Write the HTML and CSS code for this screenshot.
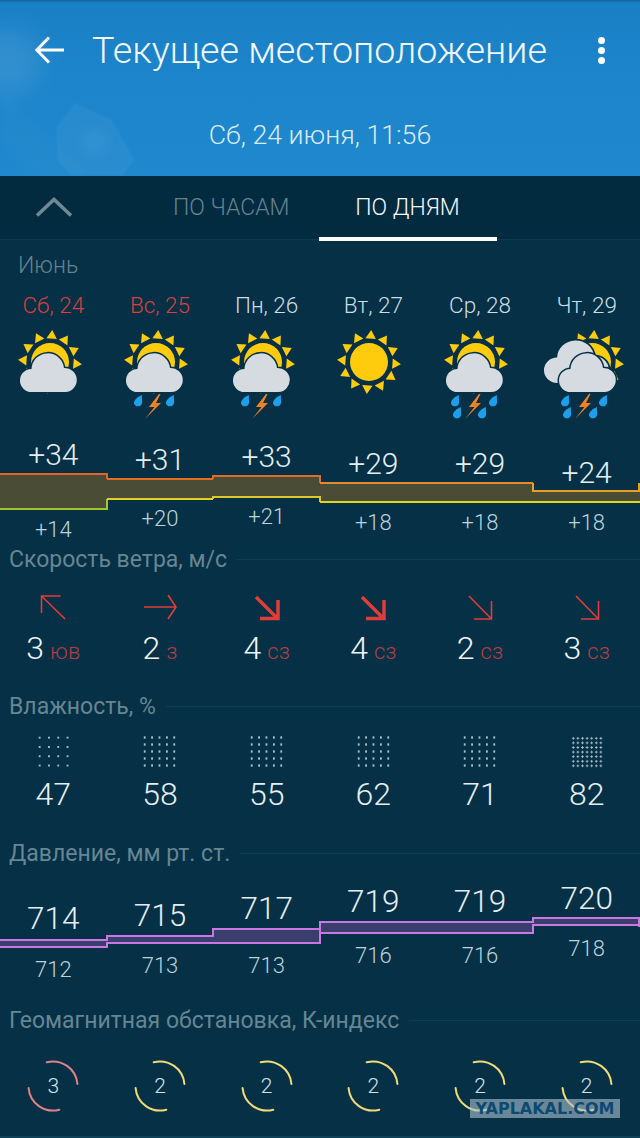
FILE: index.html
```html
<!DOCTYPE html>
<html lang="ru">
<head>
<meta charset="utf-8">
<title>Погода</title>
<link rel="stylesheet" href="styles.css">
</head>
<body>
<svg class="defs" width="0" height="0" aria-hidden="true">
  <defs>
    <polygon id="ray" points="-5.2,-23.5 5.2,-23.5 0,-32"/>
    <g id="sun">
      <g class="ray-fill">
        <use href="#ray" transform="rotate(4)"/><use href="#ray" transform="rotate(34)"/><use href="#ray" transform="rotate(64)"/>
        <use href="#ray" transform="rotate(94)"/><use href="#ray" transform="rotate(124)"/><use href="#ray" transform="rotate(154)"/>
        <use href="#ray" transform="rotate(184)"/><use href="#ray" transform="rotate(214)"/><use href="#ray" transform="rotate(244)"/>
        <use href="#ray" transform="rotate(274)"/><use href="#ray" transform="rotate(304)"/><use href="#ray" transform="rotate(334)"/>
      </g>
      <circle class="sun-disc" r="19"/>
    </g>
    <path id="cloud" class="cloud-shape" d="M13.500 63A11.500 11.500 0 0 1 13.500 40A16.300 16.300 0 0 1 46 39A12 12 0 0 1 47.500 63Z"/>
    <path id="bolt" class="bolt-shape" d="M35 65L25 78H30.500L21 90L37 74H32L36.500 65Z"/>
    <path id="drop" class="drop-shape" d="M4 -7C3.500 -3.500 4.600 -1 4 1.200A4.200 4.200 0 0 1 -4.100 1.200C-4 -2.200 0 -5.500 4 -7Z"/>
    <g id="gauge-arcs">
      <path d="M-6.3 -23.7A24.5 24.5 0 0 1 24.4 -2.1"/>
      <path d="M-24.4 2.1A24.5 24.5 0 0 0 6.3 23.7"/>
    </g>
  </defs>
</svg>

<div class="app">
  <header class="hero">
    <svg class="flare" viewBox="0 0 640 176" aria-hidden="true">
      <circle class="flare-soft" cx="8" cy="62" r="34"/>
      <polygon class="flare-hex" points="75,103 112,120 134,160 122,176 72,176 58,160 56,128"/>
      <circle class="flare-inner" cx="95" cy="142" r="14"/>
      <polygon class="flare-streak" points="0,88 90,176 30,176 0,140"/>
    </svg>
    <div class="appbar">
      <svg class="back" viewBox="0 0 30 28" aria-hidden="true"><path d="M29 14H2M14 1.5L1.8 14L14 26.5"/></svg>
      <h1 class="title">Текущее местоположение</h1>
      <div class="kebab"><i></i><i></i><i></i></div>
    </div>
    <p class="date">Сб, 24 июня, 11:56</p>
  </header>

  <nav class="tabs">
    <svg class="chevron" viewBox="0 0 38 20" aria-hidden="true"><path d="M2 18.5L19 2.5L36 18.5"/></svg>
    <span class="tab tab-hours">ПО ЧАСАМ</span>
    <span class="tab tab-days">ПО ДНЯМ</span>
  </nav>

  <section class="forecast">
    <div class="month">Июнь</div>
    <div class="cols days">
      <span class="holiday">Сб, 24</span><span class="holiday">Вс, 25</span><span>Пн, 26</span><span>Вт, 27</span><span>Ср, 28</span><span>Чт, 29</span>
    </div>
    <div class="cols icons">
      <svg class="wx" viewBox="0 0 71 92"><use href="#sun" x="32" y="33"/><use href="#cloud"/></svg>
      <svg class="wx" viewBox="0 0 71 92"><use href="#sun" x="32" y="33"/><use href="#cloud"/><use href="#drop" x="14" y="73"/><use href="#drop" x="46" y="73"/><use href="#bolt"/></svg>
      <svg class="wx" viewBox="0 0 71 92"><use href="#sun" x="32" y="33"/><use href="#cloud"/><use href="#drop" x="14" y="73"/><use href="#drop" x="46" y="73"/><use href="#bolt"/></svg>
      <svg class="wx" viewBox="0 0 71 92"><use href="#sun" x="31" y="33"/></svg>
      <svg class="wx" viewBox="0 0 71 92"><use href="#sun" x="32" y="33"/><use href="#cloud"/><use href="#drop" x="11" y="73"/><use href="#drop" x="49" y="73"/><use href="#drop" x="13" y="85"/><use href="#drop" x="38" y="85"/><use href="#bolt"/></svg>
      <svg class="wx" viewBox="0 0 71 92"><use href="#sun" x="41" y="33"/><use href="#cloud" transform="translate(-9.300 -15.400) scale(1.140 1.100)"/><use href="#cloud" x="6"/><use href="#drop" x="14" y="73"/><use href="#drop" x="52" y="73"/><use href="#drop" x="16" y="85"/><use href="#drop" x="42" y="85"/><use href="#bolt" x="3"/></svg>
    </div>
    <div class="chart chart-temp">
      <svg class="plot" viewBox="0 0 640 112" aria-hidden="true">
        <polygon class="temp-fill" points="0,42 107,42 107,47 213,47 213,44 320,44 320,51 533,51 533,59 640,59 640,70 320,70 320,65 213,65 213,67 107,67 107,77 0,77"/>
        <path class="ln" stroke="#e2622a" d="M0 42H107V47"/>
        <path class="ln" stroke="#e2701f" d="M107 47H213"/>
        <path class="ln" stroke="#dd6c26" d="M213 47V44H320V51"/>
        <path class="ln" stroke="#e28c2e" d="M320 51H533"/>
        <path class="ln" stroke="#e8a024" d="M533 51V59H639V51"/>
        <path class="ln" stroke="#a3c42a" d="M0 77H107V67"/>
        <path class="ln" stroke="#e2d022" d="M107 67H213"/>
        <path class="ln" stroke="#dfc92a" d="M213 67V65H320V70"/>
        <path class="ln" stroke="#dcd820" d="M320 70H640"/>
      </svg>
      <div class="cols chart-cols">
        <div><div class="hi" style="padding-top:5px">+34</div><div class="lo" style="margin-top:44px">+14</div></div>
        <div><div class="hi" style="padding-top:10px">+31</div><div class="lo" style="margin-top:28px">+20</div></div>
        <div><div class="hi" style="padding-top:7px">+33</div><div class="lo" style="margin-top:29px">+21</div></div>
        <div><div class="hi" style="padding-top:14px">+29</div><div class="lo" style="margin-top:28px">+18</div></div>
        <div><div class="hi" style="padding-top:14px">+29</div><div class="lo" style="margin-top:28px">+18</div></div>
        <div><div class="hi" style="padding-top:23px">+24</div><div class="lo" style="margin-top:19px">+18</div></div>
      </div>
    </div>
  </section>

  <section class="metric metric-wind">
    <div class="label"><span>Скорость ветра, м/с</span></div>
    <div class="cols arrows">
      <svg class="arrow thin" viewBox="0 0 40 42"><path d="M32 33L8.500 10M8.500 27V10H27.500"/></svg>
      <svg class="arrow thin" viewBox="0 0 40 42"><path d="M4 21H36M28 9L36 21L28 33"/></svg>
      <svg class="arrow thick" viewBox="0 0 40 42"><path d="M9 11L30 32M31 14V32.500H13"/></svg>
      <svg class="arrow thick" viewBox="0 0 40 42"><path d="M9 11L30 32M31 14V32.500H13"/></svg>
      <svg class="arrow thin" viewBox="0 0 40 42"><path d="M9 10L31.500 33M31.500 15V33H14"/></svg>
      <svg class="arrow thin" viewBox="0 0 40 42"><path d="M9 10L31.500 33M31.500 15V33H14"/></svg>
    </div>
    <div class="cols wind-values">
      <div><b>3</b><small>юв</small></div>
      <div><b>2</b><small>з</small></div>
      <div><b>4</b><small>сз</small></div>
      <div><b>4</b><small>сз</small></div>
      <div><b>2</b><small>сз</small></div>
      <div><b>3</b><small>сз</small></div>
    </div>
  </section>

  <section class="metric metric-humidity">
    <div class="label"><span>Влажность, %</span></div>
    <div class="cols dots-row">
      <i class="dots d4"></i><i class="dots d5"></i><i class="dots d5"></i><i class="dots d5"></i><i class="dots d5"></i><i class="dots d7"></i>
    </div>
    <div class="cols hum-values">
      <span>47</span><span>58</span><span>55</span><span>62</span><span>71</span><span>82</span>
    </div>
  </section>

  <section class="metric metric-pressure">
    <div class="label"><span>Давление, мм рт. ст.</span></div>
    <div class="chart chart-press">
      <svg class="plot" viewBox="0 0 640 139" aria-hidden="true">
        <polygon class="press-fill" points="0,73 107,73 107,69 213,69 213,62 320,62 320,55 533,55 533,51 640,51 640,58 533,58 533,66 320,66 320,76 107,76 107,80 0,80"/>
        <path class="ln press-ln" d="M0 73H107V69H213V62H320V55H533V51H640"/>
        <path class="ln press-ln" d="M0 80H107V76H320V66H533V58H640"/>
        <path class="ln press-ln" d="M320 55V76"/>
        <path class="ln press-ln" d="M639 51V60"/>
      </svg>
      <div class="cols chart-cols">
        <div><div class="hi press-hi" style="padding-top:34px">714</div><div class="lo" style="margin-top:20px">712</div></div>
        <div><div class="hi press-hi" style="padding-top:31px">715</div><div class="lo" style="margin-top:19px">713</div></div>
        <div><div class="hi press-hi" style="padding-top:24px">717</div><div class="lo" style="margin-top:26px">713</div></div>
        <div><div class="hi press-hi" style="padding-top:17px">719</div><div class="lo" style="margin-top:23px">716</div></div>
        <div><div class="hi press-hi" style="padding-top:17px">719</div><div class="lo" style="margin-top:23px">716</div></div>
        <div><div class="hi press-hi" style="padding-top:14px">720</div><div class="lo" style="margin-top:19px">718</div></div>
      </div>
    </div>
  </section>

  <section class="metric metric-geo">
    <div class="label"><span>Геомагнитная обстановка, К-индекс</span></div>
    <div class="cols gauges">
      <div class="gauge g-red"><svg viewBox="-26 -26 52 52"><use href="#gauge-arcs"/></svg><span>3</span></div>
      <div class="gauge g-yellow"><svg viewBox="-26 -26 52 52"><use href="#gauge-arcs"/></svg><span>2</span></div>
      <div class="gauge g-yellow"><svg viewBox="-26 -26 52 52"><use href="#gauge-arcs"/></svg><span>2</span></div>
      <div class="gauge g-yellow"><svg viewBox="-26 -26 52 52"><use href="#gauge-arcs"/></svg><span>2</span></div>
      <div class="gauge g-yellow"><svg viewBox="-26 -26 52 52"><use href="#gauge-arcs"/></svg><span>2</span></div>
      <div class="gauge g-yellow"><svg viewBox="-26 -26 52 52"><use href="#gauge-arcs"/></svg><span>2</span></div>
    </div>
  </section>

  <div class="watermark">YAPLAKAL.COM</div>
</div>
</body>
</html>
```

FILE: styles.css
```css
* { box-sizing: border-box; }
html, body { margin: 0; padding: 0; }
body {
  width: 640px;
  height: 1138px;
  overflow: hidden;
  background: #05304a;
  font-family: Roboto, "Liberation Sans", sans-serif;
  font-weight: 300;
  color: #dbe8ee;
}
.defs { position: absolute; }
.app {
  position: relative;
  width: 640px;
  height: 1138px;
  overflow: hidden;
  background: #053045;
  border-bottom: 2px solid #0f4258;
}

/* Header */
.hero {
  position: relative;
  height: 176px;
  background: linear-gradient(180deg, #13639b 0, #1a80c6 3px, #1c84ca 40%, #2088cd 100%);
  overflow: hidden;
}
.flare { position: absolute; inset: 0; width: 640px; height: 176px; }
.flare-soft { fill: #fff; opacity: .09; filter: blur(12px); }
.flare-hex { fill: #fff; opacity: .045; filter: blur(1px); }
.flare-inner { fill: #fff; opacity: .04; filter: blur(6px); }
.flare-streak { fill: #fff; opacity: .015; filter: blur(6px); }
.appbar {
  position: relative;
  display: flex;
  align-items: center;
  height: 100px;
  padding: 0 35.500px 0 35px;
}
.back { width: 30px; height: 28px; flex: none; fill: none; stroke: #fff; stroke-width: 3; }
.title {
  margin: 0 0 0 27px;
  font-size: 37.700px;
  font-weight: 300;
  line-height: 40px;
  color: #f2f8fc;
  white-space: nowrap;
}
.kebab {
  margin-left: auto;
  display: flex;
  flex-direction: column;
  gap: 3px;
}
.kebab i { display: block; width: 7px; height: 7px; border-radius: 50%; background: #fff; }
.date {
  position: relative;
  margin: 19px 0 0;
  text-align: center;
  font-size: 26.700px;
  line-height: 32px;
  color: #d8ebf6;
}

/* Tabs */
.tabs {
  position: relative;
  display: flex;
  align-items: center;
  height: 64px;
  background: #032b40;
  border-bottom: 1px solid #0e3c50;
}
.chevron {
  width: 38px;
  height: 20px;
  margin-left: 35px;
  margin-top: -2px;
  fill: none;
  stroke: #6f8a94;
  stroke-width: 3.500;
}
.tab { font-size: 23px; line-height: 64px; white-space: nowrap; text-align: center; }
.tab-hours { margin-left: 100px; color: #648290; }
.tab-days {
  position: relative;
  width: 178px;
  margin-left: 30px;
  padding-right: 2px;
  color: #f4f8fa;
}
.tab-days::after {
  content: "";
  position: absolute;
  left: 0;
  right: 0;
  bottom: -1px;
  height: 4px;
  background: #fff;
}

/* Grid of six days */
.cols {
  display: grid;
  grid-template-columns: repeat(6, 1fr);
  justify-items: center;
  text-align: center;
}

/* Forecast */
.forecast { height: 305px; }
.month {
  height: 50px;
  padding: 13px 0 0 18px;
  font-size: 23px;
  line-height: 26px;
  color: #65838f;
}
.days { font-size: 22.500px; line-height: 30px; color: #cbdee6; }
.holiday { color: #d6403f; }
.icons { margin-top: 9px; height: 92px; }
.wx { width: 71px; height: 92px; overflow: visible; }
.ray-fill { fill: #ffcc0d; }
.sun-disc { fill: #ffcc0d; }
.cloud-shape { fill: #d5dbe1; stroke: #053045; stroke-width: 3; paint-order: stroke; }
.bolt-shape { fill: #f58220; }
.drop-shape { fill: #1d9fec; }

/* Charts */
.chart { position: relative; }
.chart-temp { height: 114px; margin-top: 11px; }
.chart-press { height: 139px; }
.plot { position: absolute; left: 0; top: 0; width: 640px; overflow: visible; }
.temp-fill { fill: #4a4c36; }
.press-fill { fill: #3a3e6c; }
.ln { fill: none; stroke-width: 2; }
.press-ln { stroke: #c878e0; }
.chart-cols { position: relative; }
.hi { font-size: 30px; line-height: 36px; color: #e4eef2; }
.press-hi { font-size: 31.500px; }
.lo { font-size: 22px; line-height: 26px; color: #bcd3dc; }

/* Metric sections */
.metric { height: 147px; }
.label {
  display: flex;
  align-items: center;
  height: 28px;
  padding-left: 9px;
  font-size: 23px;
  font-weight: 400;
  color: #668694;
  white-space: nowrap;
}
.label::after {
  content: "";
  flex: 1;
  height: 1px;
  margin-left: 10px;
  background: #0e3d52;
}
.arrows { margin-top: 13px; height: 42px; }
.arrow { width: 40px; height: 42px; fill: none; stroke: #df3d39; }
.thin { stroke-width: 1.600; }
.thick { stroke-width: 3.500; }
.wind-values { height: 40px; }
.wind-values div { display: flex; align-items: baseline; gap: 6px; line-height: 40px; }
.wind-values b { font-size: 32px; font-weight: 300; color: #eef5f8; }
.wind-values small { font-size: 22px; color: #b03f45; }

.dots-row { margin-top: 13px; height: 37px; align-items: center; }
.dots { display: block; }
.d4 {
  width: 37.200px;
  height: 37.200px;
  background: radial-gradient(circle, #a9bfc9 1px, transparent 1.300px) 0 0 / 9.300px 9.300px;
}
.d5 {
  width: 37px;
  height: 35px;
  background: radial-gradient(circle, #a9bfc9 1px, transparent 1.300px) 0 0 / 7.400px 7px;
}
.d7 {
  width: 32.200px;
  height: 32.200px;
  background: radial-gradient(circle, #a9bfc9 .9px, transparent 1.200px) 0 0 / 4.600px 4.600px;
}
.hum-values { margin-top: 4px; font-size: 32px; line-height: 40px; color: #e4eef2; }

.metric-pressure { height: 167px; }
.metric-geo { height: 130px; }
.gauges { margin-top: 26px; }
.gauge {
  position: relative;
  display: flex;
  align-items: center;
  justify-content: center;
  width: 52px;
  height: 52px;
}
.gauge svg { position: absolute; inset: 0; width: 52px; height: 52px; fill: none; stroke-width: 2; stroke-linecap: round; }
.g-red svg { stroke: #e08088; }
.g-yellow svg { stroke: #efdc78; }
.gauge span { font-size: 21px; color: #cfe2ea; }

.watermark {
  position: absolute;
  left: 470px;
  top: 1099px;
  width: 150px;
  height: 19px;
  background: rgba(170, 190, 205, .62);
  font-family: "DejaVu Sans", sans-serif;
  font-weight: 700;
  font-size: 16px;
  line-height: 19px;
  text-align: center;
  color: #0d4a72;
  white-space: nowrap;
}
```
